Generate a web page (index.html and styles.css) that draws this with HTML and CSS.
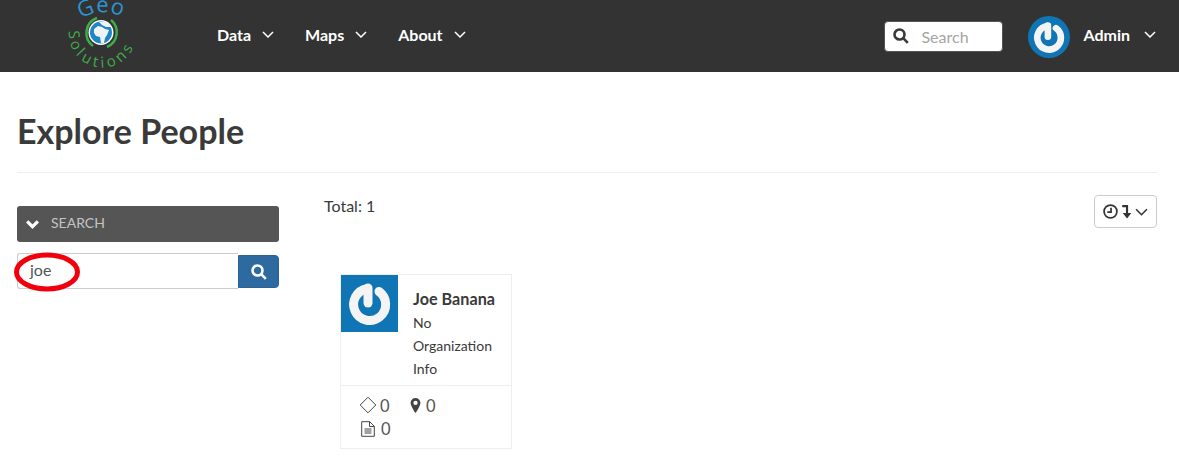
FILE: index.html
```html
<!DOCTYPE html>
<html lang="en">
<head>
<meta charset="utf-8">
<title>Explore People</title>
<link rel="stylesheet" href="styles.css">
</head>
<body>
<header class="topbar">
  <a class="logo" href="#">
    <svg width="80" height="72" viewBox="0 0 80 72">
      <defs>
        <path id="geoArc" d="M20 19 Q 40 6 64 18"/>
        <path id="solArc" d="M8 31 A 31 31 0 0 0 75 37"/>
      </defs>
      <text class="logo-geo"><textPath href="#geoArc">Geo</textPath></text>
      <text class="logo-sol"><textPath href="#solArc">Solutions</textPath></text>
      <path d="M36 18 A16 16 0 0 0 32 46" class="logo-swirl"/>
      <path d="M46 47 A16 16 0 0 0 50 20" class="logo-swirl"/>
      <circle cx="40" cy="32.500" r="12.500" fill="#fff"/>
      <circle cx="40" cy="32.500" r="11" fill="#1f86c6"/>
      <path d="M33 29 L37 26 L41 27 L44 29 L48 30 L46 35 L44 38 L43 43 L40 43 L39 37 L35 36 L33 33 Z" fill="#eef4f6"/>
      <path d="M38 22 L46 22 L50 27 L45 27 L41 25 Z" fill="#eef4f6"/>
    </svg>
  </a>
  <nav class="nav">
    <a class="nav-item" href="#">Data<svg class="chev" viewBox="0 0 12 7"><path d="M1 1l5 5 5-5"/></svg></a>
    <a class="nav-item" href="#">Maps<svg class="chev" viewBox="0 0 12 7"><path d="M1 1l5 5 5-5"/></svg></a>
    <a class="nav-item" href="#">About<svg class="chev" viewBox="0 0 12 7"><path d="M1 1l5 5 5-5"/></svg></a>
  </nav>
  <div class="top-right">
    <label class="top-search">
      <svg class="search-icon" viewBox="0 0 16 16"><circle cx="6.500" cy="6.500" r="5"/><path d="M10.200 10.200l4.600 4.600"/></svg>
      <span class="placeholder">Search</span>
    </label>
    <svg class="avatar-round" viewBox="0 0 57 57">
      <circle cx="28.500" cy="28.500" r="28.500" fill="#0f75b5"/>
      <path d="M38 16.500A16 16 0 1 1 26 13.700" class="power-lg"/>
      <path d="M27 13v15" class="power-lg"/>
    </svg>
    <a class="user" href="#">Admin<svg class="chev" viewBox="0 0 12 7"><path d="M1 1l5 5 5-5"/></svg></a>
  </div>
</header>

<main class="page">
  <h1 class="title">Explore People</h1>
  <div class="columns">
    <aside class="sidebar">
      <div class="panel-head">
        <svg class="panel-chev" viewBox="0 0 14 10"><path d="M2 2l5 5 5-5"/></svg>
        <span>SEARCH</span>
      </div>
      <div class="search-group">
        <div class="search-input">joe</div>
        <button class="search-btn" type="button">
          <svg viewBox="0 0 16 16"><circle cx="6.500" cy="6.500" r="5"/><path d="M10.200 10.200l4.600 4.600"/></svg>
        </button>
        <svg class="ring" viewBox="0 0 66 40"><ellipse cx="33" cy="20" rx="30.500" ry="17"/></svg>
      </div>
    </aside>
    <section class="results">
      <div class="results-head">
        <span class="total">Total: 1</span>
        <button class="sort" type="button">
          <svg class="sort-clock" viewBox="0 0 14 14"><circle cx="7" cy="7" r="6"/><path d="M7.500 3.400V7.500H4"/></svg>
          <svg class="sort-arrow" viewBox="0 0 10 14"><path d="M1 2h4.500v9"/><path class="fill" d="M1.500 8.500h8L5.500 13.500z"/></svg>
          <svg class="sort-chev" viewBox="0 0 12 7"><path d="M1 1l5 5 5-5"/></svg>
        </button>
      </div>
      <article class="card">
        <div class="card-top">
          <svg class="card-avatar" viewBox="0 0 57 57">
            <rect width="57" height="57" fill="#0f75b5"/>
            <path d="M38 16.500A16 16 0 1 1 26 13.700" class="power-lg"/>
            <path d="M27 13v15" class="power-lg"/>
          </svg>
          <div class="card-info">
            <div class="card-name">Joe Banana</div>
            <div class="card-org">No Organization Info</div>
          </div>
        </div>
        <div class="card-stats">
          <span class="stat">
            <svg class="stat-diamond" viewBox="0 0 18 18"><path d="M9 1.200L16.800 9 9 16.800 1.200 9z"/></svg>
            0
          </span>
          <span class="stat stat-pin">
            <svg class="stat-marker" viewBox="0 0 10 14"><path fill-rule="evenodd" d="M5 0a4.600 4.600 0 0 0-4.600 4.600C.4 7.400 5 14 5 14s4.600-6.600 4.600-9.400A4.600 4.600 0 0 0 5 0zm0 6.600a2 2 0 1 1 0-4 2 2 0 0 1 0 4z"/></svg>
            0
          </span>
          <span class="stat stat-third">
            <svg class="stat-doc" viewBox="0 0 14 16"><path d="M.7.7h8l4.600 4.600v10H.7z"/><path d="M8.500.7v4.800h4.800M3.500 8h7M3.500 10h7M3.500 12h7"/></svg>
            0
          </span>
        </div>
      </article>
    </section>
  </div>
</main>
</body>
</html>
```
FILE: styles.css
```css
* { box-sizing: border-box; }
html, body { height: 100%; }
body {
  margin: 0;
  background: #fff;
  color: #3a3a3a;
  font-family: Lato, "Open Sans", sans-serif;
  font-size: 16px;
  overflow: hidden;
}
a { color: inherit; text-decoration: none; }

.topbar {
  display: flex;
  align-items: center;
  height: 72px;
  background: #333;
  color: #fff;
  padding-left: 61px;
  padding-right: 23px;
}
.logo { display: block; width: 80px; height: 72px; flex: none; }
.logo svg { display: block; overflow: hidden; }
.logo-geo { font: 400 22px "Open Sans", sans-serif; fill: #2c94cf; letter-spacing: .6px; }
.logo-sol { font: 400 15px "Open Sans", sans-serif; fill: #3fae49; letter-spacing: 3.700px; }
.logo-swirl { fill: none; stroke: #3fae49; stroke-width: 2.500; }

.nav { display: flex; margin-left: 76px; gap: 31px; padding-bottom: 3px; }
.nav-item {
  display: flex;
  align-items: center;
  font-weight: 700;
  font-size: 16px;
  color: #fff;
}
.chev {
  width: 12px;
  height: 7px;
  fill: none;
  stroke: #fff;
  stroke-width: 1.500;
}
.nav-item .chev { margin-left: 11px; }

.top-right { display: flex; align-items: center; margin-left: auto; }
.top-search {
  display: flex;
  align-items: center;
  width: 119px;
  height: 31px;
  background: #fff;
  border-radius: 4px;
  border: 1px solid #555;
  padding-left: 8px;
}
.search-icon {
  width: 16px;
  height: 16px;
  fill: none;
  stroke: #3a3a3a;
  stroke-width: 2.600;
}
.placeholder { margin-left: 12px; color: #a5a5a5; font-size: 16px; }
.avatar-round { width: 42px; height: 42px; margin: 2px 0 0 25px; }
.power-lg { fill: none; stroke: #f4f4f4; stroke-width: 9; stroke-linecap: round; }
.user { display: flex; align-items: center; margin-left: 13px; padding-bottom: 3px; font-weight: 700; font-size: 16px; }
.user .chev { margin-left: 14px; }

.page { padding: 0 22px 0 17px; }
.title {
  margin: 0;
  padding-top: 37px;
  height: 101px;
  border-bottom: 1px solid #eee;
  font-size: 34px;
  line-height: 43px;
  font-weight: 700;
  color: #3a3a3a;
}
.columns { display: flex; padding-top: 22px; }
.sidebar { flex: none; width: 262px; padding-top: 11px; }
.panel-head {
  display: flex;
  align-items: center;
  height: 36px;
  background: #555;
  border-radius: 3px;
  color: #c4c4c4;
  font-size: 14px;
  padding: 0 0 3px 8px;
}
.panel-chev {
  width: 15px;
  height: 11px;
  margin-top: 3px;
  fill: none;
  stroke: #fff;
  stroke-width: 3;
}
.panel-head span { margin-left: 11px; }
.search-group { position: relative; display: flex; margin-top: 11px; height: 36px; }
.search-input {
  flex: 1;
  height: 36px;
  border: 1px solid #ccc;
  border-right: 0;
  border-radius: 3px 0 0 3px;
  padding-left: 12px;
  line-height: 31px;
  font-size: 16px;
  color: #555;
}
.search-btn {
  width: 41px;
  height: 33px;
  padding: 0;
  margin-top: 2px;
  border: 1px solid #2a6496;
  border-radius: 0 4px 4px 0;
  background: #2c6a9f;
  display: flex;
  align-items: center;
  justify-content: center;
}
.search-btn svg {
  width: 16px;
  height: 16px;
  fill: none;
  stroke: #fff;
  stroke-width: 2.600;
}
.ring {
  position: absolute;
  left: -3px;
  top: -1px;
  width: 66px;
  height: 40px;
  fill: none;
  stroke: #f0000c;
  stroke-width: 5;
}

.results { flex: 1; margin-left: 45px; }
.results-head { display: flex; justify-content: space-between; height: 79px; }
.total { margin-top: 2px; line-height: 18px; font-size: 16px; }
.sort {
  display: flex;
  align-items: center;
  justify-content: center;
  width: 63px;
  height: 33px;
  background: #fff;
  border: 1px solid #ccc;
  border-radius: 4px;
  padding: 0;
}
.sort-clock { width: 15px; height: 15px; fill: none; stroke: #333; stroke-width: 1.600; }
.sort-arrow { width: 11px; height: 15px; margin-left: 3px; fill: none; stroke: #333; stroke-width: 2; }
.sort-arrow .fill { fill: #333; stroke: none; }
.sort-chev { width: 13px; height: 8px; margin-left: 3px; fill: none; stroke: #333; stroke-width: 1.500; }

.card {
  width: 172px;
  height: 175px;
  margin-left: 16px;
  border: 1px solid #eee;
  color: #3a3a3a;
}
.card-top { display: flex; height: 111px; border-bottom: 1px solid #eee; }
.card-avatar { width: 57px; height: 57px; flex: none; }
.card-info { padding: 14px 10px 0 15px; }
.card-name { font-weight: 700; font-size: 16.200px; line-height: 20px; }
.card-org { font-size: 14px; line-height: 23px; margin-top: 2px; }
.card-stats {
  display: flex;
  flex-wrap: wrap;
  padding: 8px 0 0 18px;
  font-size: 16.500px;
  color: #555;
}
.stat { display: flex; align-items: center; gap: 3px; width: 51px; height: 23px; }
.stat-pin { width: 60px; gap: 5px; }
.stat-third { gap: 5px; }
.stat-diamond { width: 18px; height: 18px; margin-top: -2px; fill: none; stroke: #444; stroke-width: 1; }
.stat-marker { width: 11px; height: 15px; fill: #444; margin-top: -1px; }
.stat-doc { width: 14px; height: 16px; fill: none; stroke: #444; stroke-width: 1; margin: 0 1px 0 2px; }
```
